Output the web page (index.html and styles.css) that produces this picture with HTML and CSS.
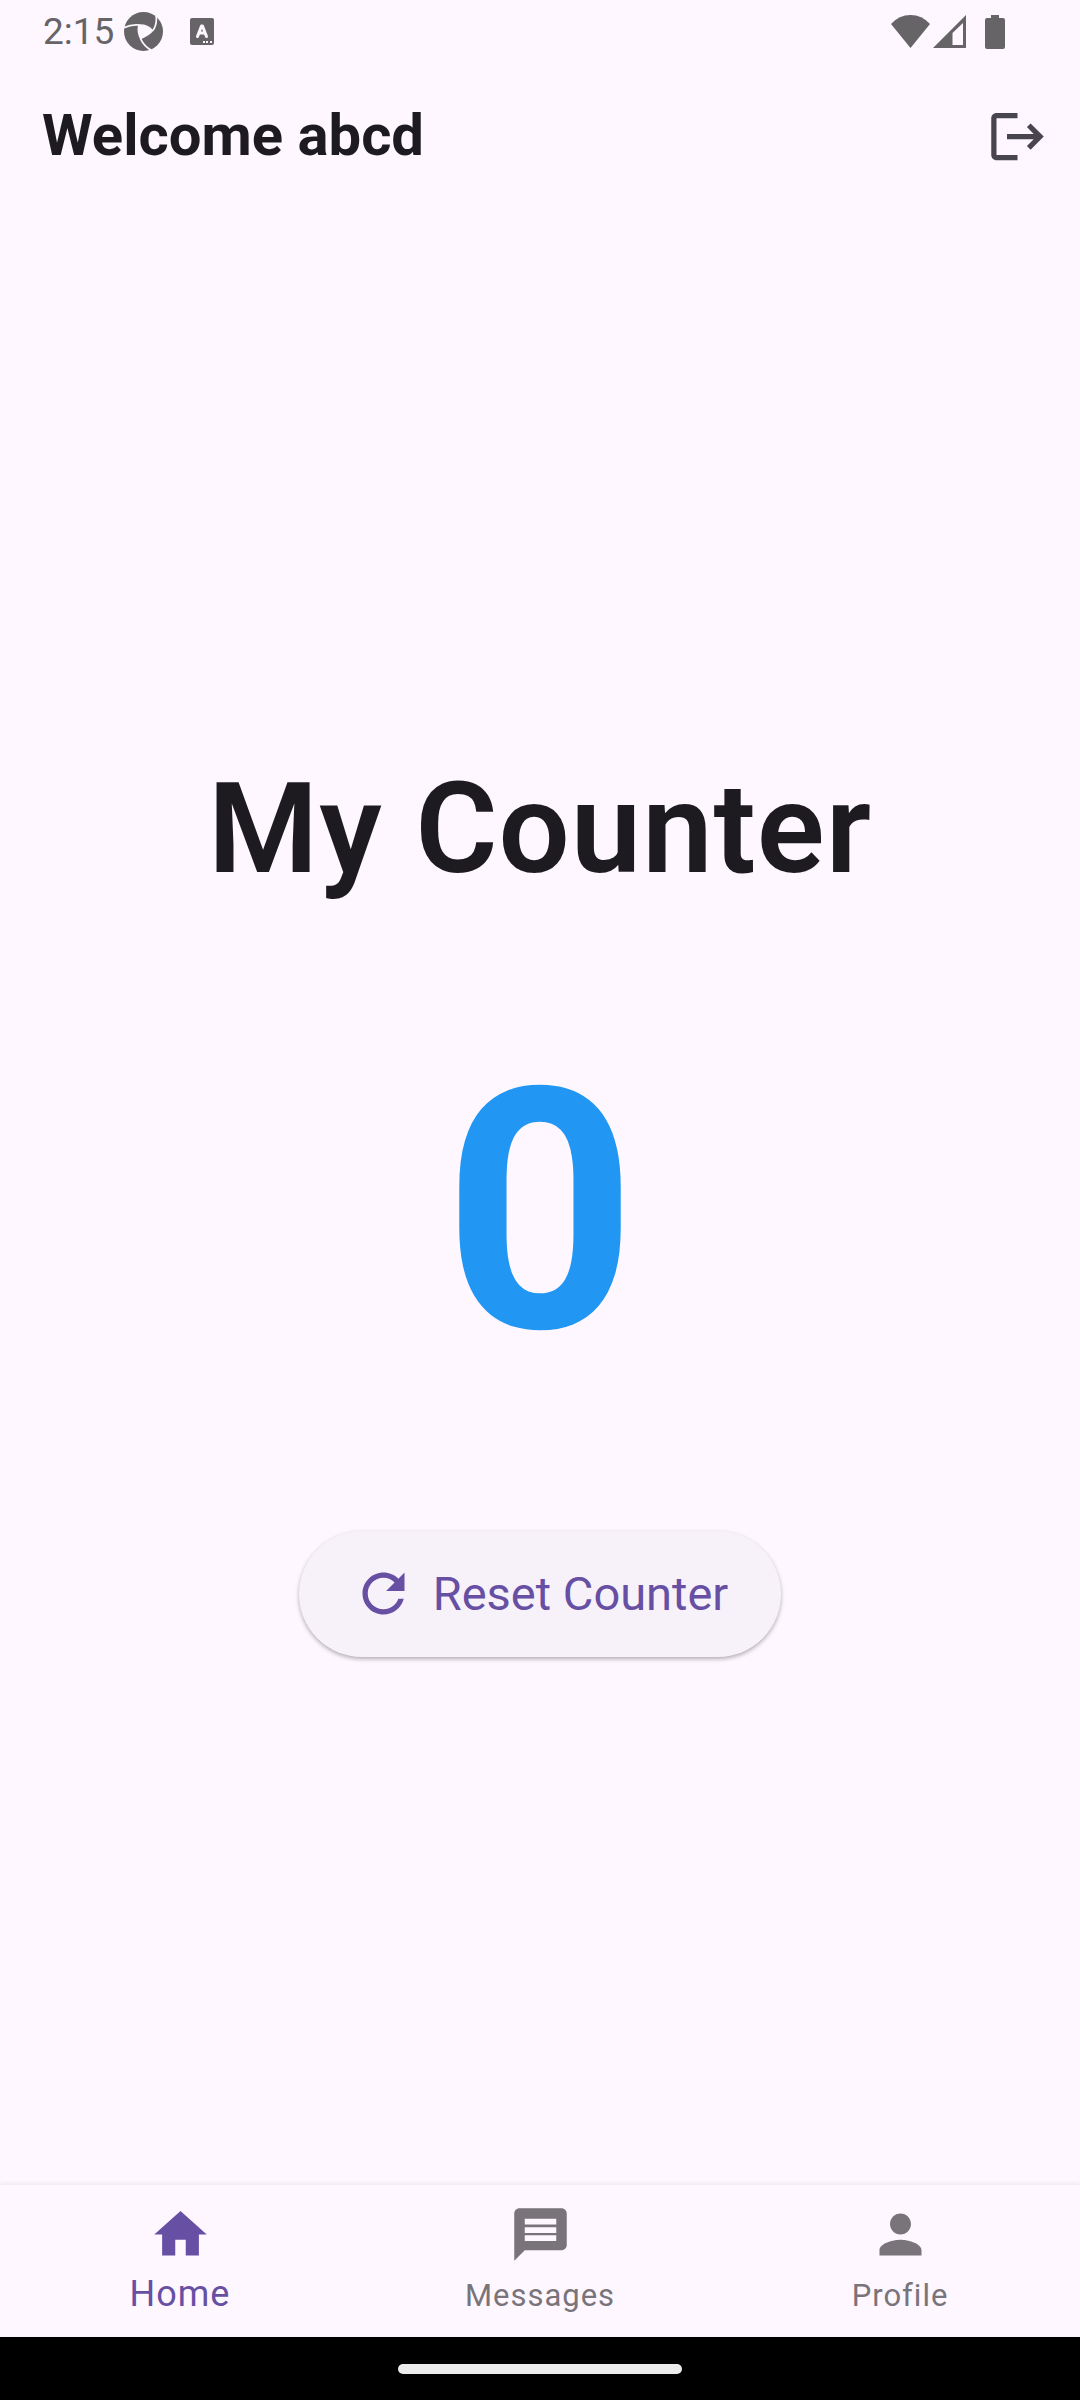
FILE: index.html
```html
<!DOCTYPE html>
<html lang="en">
<head>
<meta charset="utf-8">
<meta name="viewport" content="width=device-width, initial-scale=1">
<title>My Counter</title>
<link rel="stylesheet" href="styles.css">
</head>
<body>
<div class="app">
  <div class="status">
    <span class="clock">2:15</span>
    <svg class="status-swirl" viewBox="0 0 117 117" aria-hidden="true">
      <circle cx="58.500" cy="58.500" r="58.500" fill="#676468"/>
      <g fill="#fef7ff" stroke="#fef7ff" stroke-width="4" stroke-linejoin="round">
        <path d="M44 39C60 38 76 44 86 56C76 68 64 74 50 80C43 68 41 54 44 39Z"/>
        <path d="M0 47C14 40 28 37 46 39M96 10C99 28 95 44 86 56M49 79C56 94 66 106 82 115" fill="none" stroke-width="5"/>
      </g>
    </svg>
    <svg class="status-a" viewBox="0 0 24 27" aria-hidden="true">
      <rect width="24" height="27" rx="2" fill="#676468"/>
      <path d="M7.500 18.500L11.500 8H12.500L16.500 18.500M9 15H15" fill="none" stroke="#fef7ff" stroke-width="3" stroke-linejoin="round" stroke-linecap="round"/>
      <path d="M13 23h2v2h-2zM16 23h2v2h-2zM20 23h2v2h-2z" fill="#fef7ff"/>
    </svg>
    <div class="signals">
      <svg class="wifi" viewBox="0 0 39 33" aria-hidden="true"><path d="M0 9Q8 0 19.500 0T39 9L19.500 33Z"/></svg>
      <svg class="cell" viewBox="0 0 33 33" aria-hidden="true"><path fill-rule="evenodd" d="M33 0V33H0ZM30 8L19.500 18V30H30Z"/></svg>
      <svg class="battery" viewBox="0 0 20 34" aria-hidden="true"><path d="M6 0h8v3h4q2 0 2 2v27q0 2-2 2H2q-2 0-2-2V5q0-2 2-2h4z"/></svg>
    </div>
  </div>
  <header class="appbar">
    <h1 class="welcome">Welcome abcd</h1>
    <button class="logout" type="button" aria-label="Log out">
      <svg class="icon" viewBox="0 0 24 24" aria-hidden="true"><path d="M17 7l-1.410 1.410L18.170 11H8v2h10.170l-2.580 2.580L17 17l5-5zM4 5h8V3H4c-1.100 0-2 .9-2 2v14c0 1.100.9 2 2 2h8v-2H4V5z"/></svg>
    </button>
  </header>
  <main class="content">
    <h2 class="title">My Counter</h2>
    <output class="count">0</output>
    <button class="reset" type="button">
      <svg class="icon" viewBox="0 0 24 24" aria-hidden="true"><path d="M17.650 6.350C16.200 4.900 14.210 4 12 4c-4.420 0-7.990 3.580-7.990 8s3.570 8 7.990 8c3.730 0 6.840-2.550 7.730-6h-2.080c-.82 2.330-3.040 4-5.650 4-3.310 0-6-2.690-6-6s2.690-6 6-6c1.660 0 3.140.69 4.220 1.780L13 11h7V4l-2.350 2.350z"/></svg>
      <span>Reset Counter</span>
    </button>
  </main>
  <nav class="tabs">
    <a class="tab tab-active" href="#home" aria-current="page">
      <svg class="icon" viewBox="0 0 24 24" aria-hidden="true"><path d="M10 20v-6h4v6h5v-8h3L12 3 2 12h3v8z"/></svg>
      <span>Home</span>
    </a>
    <a class="tab" href="#messages">
      <svg class="icon" viewBox="0 0 24 24" aria-hidden="true"><path d="M20 2H4c-1.100 0-2 .9-2 2v18l4-4h14c1.100 0 2-.9 2-2V4c0-1.100-.9-2-2-2zm-2 12.500H6v-2.200h12v2.200zm0-3.100H6V9.200h12v2.200zm0-3.200H6V6h12v2.200z"/></svg>
      <span>Messages</span>
    </a>
    <a class="tab" href="#profile">
      <svg class="icon" viewBox="0 0 24 24" aria-hidden="true"><path d="M12 12c2.210 0 4-1.790 4-4s-1.790-4-4-4-4 1.790-4 4 1.790 4 4 4zm0 2c-2.670 0-8 1.340-8 4v2h16v-2c0-2.660-5.330-4-8-4z"/></svg>
      <span>Profile</span>
    </a>
  </nav>
  <div class="gesture"><div class="handle"></div></div>
</div>
</body>
</html>
```
FILE: styles.css
```css
* {
  box-sizing: border-box;
}

body {
  margin: 0;
  background: #fef7ff;
  color: #1d1b20;
  font-family: Roboto, sans-serif;
}

h1,
h2 {
  margin: 0;
}

button {
  border: 0;
  background: none;
  font: inherit;
}

svg {
  display: block;
  flex: none;
}

.app {
  display: flex;
  flex-direction: column;
  min-height: 100vh;
}

.icon {
  width: 63px;
  height: 63px;
  fill: currentColor;
}

.status {
  display: flex;
  align-items: center;
  height: 63px;
  padding: 0 75px 0 43px;
  color: #676468;
  fill: #676468;
}

.clock {
  width: 81px;
  font-size: 37px;
}

.status-swirl {
  width: 39px;
  height: 39px;
}

.status-a {
  width: 24px;
  height: 27px;
  margin-left: 27px;
}

.signals {
  display: flex;
  align-items: center;
  margin-left: auto;
}

.wifi {
  width: 39px;
  height: 33px;
}

.cell {
  width: 33px;
  height: 33px;
  margin-left: 3px;
}

.battery {
  width: 20px;
  height: 34px;
  margin-left: 19px;
}

.appbar {
  display: flex;
  align-items: center;
  justify-content: space-between;
  height: 147px;
  padding: 0 31px 0 42px;
}

.welcome {
  padding-bottom: 4px;
  font-size: 58px;
  font-weight: 700;
}

.logout {
  padding: 0;
  color: #49454f;
}

.content {
  flex: 1;
  display: flex;
  flex-direction: column;
  align-items: center;
  justify-content: center;
}

.title {
  font-size: 126px;
  font-weight: 600;
  line-height: 180px;
  letter-spacing: 1px;
}

.count {
  margin: 53px 0 79px;
  color: #2196f3;
  font-size: 336px;
  font-weight: 700;
  line-height: 480px;
}

.reset {
  display: flex;
  align-items: center;
  gap: 18px;
  height: 126px;
  padding: 0 53px;
  border-radius: 63px;
  background: #f7f2fa;
  box-shadow: 0 2px 4px rgba(0, 0, 0, 0.3);
  color: #6750a4;
  font-size: 47px;
}

.tabs {
  display: grid;
  grid-template-columns: repeat(3, 1fr);
  height: 152px;
  padding-top: 18px;
  box-shadow: 0 -2px 4px rgba(0, 0, 0, 0.06);
}

.tab {
  display: flex;
  flex-direction: column;
  align-items: center;
  gap: 6px;
  color: #79747a;
  font-size: 31px;
  line-height: 48px;
  letter-spacing: 1px;
  text-decoration: none;
}

.tab-active {
  color: #6750a4;
  font-size: 36px;
  line-height: 44px;
}

.gesture {
  display: flex;
  align-items: center;
  justify-content: center;
  height: 63px;
  background: #000;
}

.handle {
  width: 284px;
  height: 10px;
  border-radius: 5px;
  background: #ececec;
}
```
